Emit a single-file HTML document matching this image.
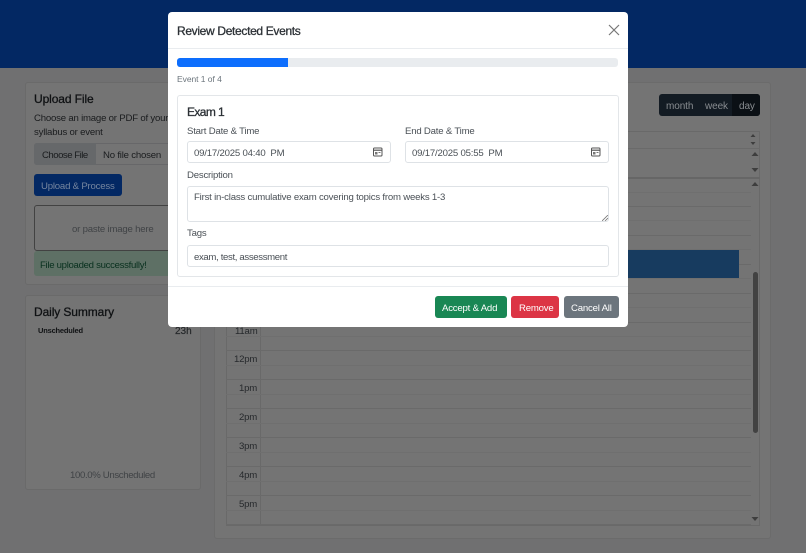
<!DOCTYPE html>
<html><head><meta charset="utf-8"><title>Review Detected Events</title>
<style>
html,body{margin:0;padding:0;width:806px;height:553px;overflow:hidden;background:#707071}
body{position:relative;font-family:"Liberation Sans",Arial,sans-serif}
.b{position:absolute;box-sizing:border-box}
.t{position:absolute;white-space:nowrap;line-height:14px;font-size:9.6px;letter-spacing:-.2px}
.h{position:absolute;white-space:nowrap;line-height:14px;font-size:12px;letter-spacing:-.1px;-webkit-text-stroke:.3px currentColor}
.l{position:absolute;height:1px;background:#6a6a6a}
.m{background:#6f6f6f}
.i{position:absolute;background:#fff;border:1px solid #dee2e6;border-radius:3px;box-sizing:border-box}
.ic{position:absolute;width:10px;height:10px}
</style></head><body>
<div class="b" style="left:0;top:0;width:806px;height:68px;background:#032863"></div>

<div class="b" style="left:25px;top:82px;width:180px;height:203px;background:#747474;border:1px solid #6a6a6a;border-radius:3px"></div>
<div class="h" style="left:34px;top:92px;color:#101214">Upload File</div>
<div class="t" style="left:34px;top:112px;color:#1a1c1e">Choose an image or PDF of your</div>
<div class="t" style="left:34px;top:126px;color:#1a1c1e">syllabus or event</div>
<div class="b" style="left:34px;top:143px;width:140px;height:22px;background:#747474;border:1px solid #676769;border-radius:3px"></div>
<div class="b" style="left:34px;top:143px;width:62px;height:22px;background:#66686a;border-radius:3px 0 0 3px"></div>
<div class="t" style="left:42px;top:149px;color:#1a1c1e;letter-spacing:-.5px">Choose File</div>
<div class="t" style="left:103px;top:149px;color:#1a1c1e">No file chosen</div>
<div class="b" style="left:34px;top:174px;width:88px;height:22px;background:#032863;border-radius:3px"></div>
<div class="t" style="left:41px;top:180px;color:#76869f">Upload &amp; Process</div>
<div class="b" style="left:34px;top:205px;width:164px;height:46px;border:1px solid #424242;border-radius:3px"></div>
<div class="t" style="left:72px;top:223px;color:#404346">or paste image here</div>
<div class="b" style="left:34px;top:251px;width:164px;height:25px;background:#5e7065;border-radius:3px"></div>
<div class="t" style="left:40px;top:259px;color:#08301e;letter-spacing:-.3px">File uploaded successfully!</div>

<div class="b" style="left:25px;top:295px;width:176px;height:195px;background:#747474;border:1px solid #6a6a6a;border-radius:3px"></div>
<div class="h" style="left:34px;top:305px;color:#101214">Daily Summary</div>
<div class="t" style="left:38px;top:324px;font-size:7.5px;font-weight:bold;color:#101214">Unscheduled</div>
<div class="t" style="left:175px;top:325px;font-size:10px;letter-spacing:0;-webkit-text-stroke:.2px currentColor;color:#26292b">23h</div>
<div class="t" style="left:70px;top:469px;color:#404346;letter-spacing:-.35px">100.0% Unscheduled</div>

<div class="b" style="left:214px;top:82px;width:557px;height:457px;background:#747474;border:1px solid #6b6b6b;border-radius:3px"></div>
<div class="b" style="left:659px;top:94px;width:101px;height:22px;background:#131b23;border-radius:3px"></div>
<div class="b" style="left:732px;top:94px;width:28px;height:22px;background:#0b1015;border-radius:0 3px 3px 0"></div>
<div class="t" style="left:666px;top:100px;color:#888c90;font-size:10px;letter-spacing:-.1px">month</div>
<div class="t" style="left:705px;top:100px;color:#888c90;font-size:10px;letter-spacing:-.1px">week</div>
<div class="t" style="left:739px;top:100px;color:#888c90;font-size:10px;letter-spacing:-.1px">day</div>

<div class="b" style="left:226px;top:131px;width:534px;height:395px;border:1px solid #696969"></div>
<div class="l" style="left:226px;top:148px;width:534px"></div>
<div class="l" style="left:226px;top:177px;width:534px;height:2px;background:#666"></div>
<div class="b" style="left:260px;top:179px;width:1px;height:347px;background:#696969"></div>
<div class="l m" style="left:226px;top:192px;width:525px"></div>
<div class="l" style="left:226px;top:206px;width:525px"></div>
<div class="l m" style="left:226px;top:220px;width:525px"></div>
<div class="l" style="left:226px;top:235px;width:525px"></div>
<div class="l m" style="left:226px;top:249px;width:525px"></div>
<div class="l" style="left:226px;top:264px;width:525px"></div>
<div class="l m" style="left:226px;top:278px;width:525px"></div>
<div class="l" style="left:226px;top:293px;width:525px"></div>
<div class="l m" style="left:226px;top:307px;width:525px"></div>
<div class="l" style="left:226px;top:322px;width:525px"></div>
<div class="l m" style="left:226px;top:336px;width:525px"></div>
<div class="l" style="left:226px;top:350px;width:525px"></div>
<div class="l m" style="left:226px;top:365px;width:525px"></div>
<div class="l" style="left:226px;top:379px;width:525px"></div>
<div class="l m" style="left:226px;top:394px;width:525px"></div>
<div class="l" style="left:226px;top:408px;width:525px"></div>
<div class="l m" style="left:226px;top:423px;width:525px"></div>
<div class="l" style="left:226px;top:437px;width:525px"></div>
<div class="l m" style="left:226px;top:452px;width:525px"></div>
<div class="l" style="left:226px;top:466px;width:525px"></div>
<div class="l m" style="left:226px;top:481px;width:525px"></div>
<div class="l" style="left:226px;top:495px;width:525px"></div>
<div class="l m" style="left:226px;top:510px;width:525px"></div>
<div class="l" style="left:226px;top:524px;width:525px"></div>
<div class="b" style="left:260px;top:250px;width:479px;height:28px;background:#173b5f"></div>
<div class="t" style="left:235px;top:325px;color:#26292c">11am</div>
<div class="t" style="left:234px;top:353px;color:#26292c">12pm</div>
<div class="t" style="left:239px;top:382px;color:#26292c">1pm</div>
<div class="t" style="left:239px;top:411px;color:#26292c">2pm</div>
<div class="t" style="left:239px;top:440px;color:#26292c">3pm</div>
<div class="t" style="left:239px;top:469px;color:#26292c">4pm</div>
<div class="t" style="left:239px;top:498px;color:#26292c">5pm</div>
<div class="b" style="left:753px;top:272px;width:5px;height:161px;background:#424242;border-radius:3px"></div>
<svg class="b" style="left:745px;top:130px" width="20" height="396" viewBox="0 0 20 396">
<path d="M8 4l2.500 3h-5zM8 15l-2.500-3h5zM10 22l3.500 4h-7zM10 42l-3.500-4h7zM10 52l3.500 4h-7zM10 391l-3.500-4h7z" fill="#3e3e3e"/></svg>

<div class="b" style="left:168px;top:12px;width:460px;height:315px;background:#fff;border-radius:4px"></div>
<div class="h" style="left:177px;top:24px;color:#2c3136;letter-spacing:-.33px">Review Detected Events</div>
<svg class="b" style="left:608px;top:24px" width="12" height="12" viewBox="0 0 12 12"><path d="M1 1l10 10M11 1L1 11" stroke="#777" stroke-width="1.200" fill="none"/></svg>
<div class="l" style="left:168px;top:48px;width:460px;background:#e9ecef"></div>
<div class="b" style="left:177px;top:58px;width:441px;height:9px;background:#e9ecef;border-radius:3px;overflow:hidden"><div class="b" style="left:0;top:0;width:111px;height:9px;background:#0d6efd"></div></div>
<div class="t" style="left:177px;top:72px;font-size:8.500px;color:#6c757d;letter-spacing:-.05px">Event 1 of 4</div>

<div class="b" style="left:177px;top:95px;width:441.500px;height:182px;border:1px solid #e3e6e9;border-radius:3px"></div>
<div class="h" style="left:187px;top:105px;color:#2c3136;letter-spacing:-.6px">Exam 1</div>
<div class="t" style="left:187px;top:125px;color:#4a5056">Start Date &amp; Time</div>
<div class="t" style="left:405px;top:125px;color:#4a5056">End Date &amp; Time</div>
<div class="i" style="left:187px;top:141px;width:204px;height:22px"></div>
<div class="i" style="left:405px;top:141px;width:204px;height:22px"></div>
<div class="t" style="left:194px;top:147px;color:#4a5056">09/17/2025 04:40&nbsp; PM</div>
<div class="t" style="left:412px;top:147px;color:#4a5056">09/17/2025 05:55&nbsp; PM</div>
<svg class="ic" style="left:373px;top:147px" viewBox="0 0 10 10"><rect x=".5" y="1" width="8.500" height="8" rx="1" fill="none" stroke="#555"/><path d="M.5 3.200h8.500" stroke="#555" stroke-width="1.200"/><path d="M2 5h2.500v2.500H2zM5.500 5H7.500v1H5.500z" fill="#777"/></svg>
<svg class="ic" style="left:591px;top:147px" viewBox="0 0 10 10"><rect x=".5" y="1" width="8.500" height="8" rx="1" fill="none" stroke="#555"/><path d="M.5 3.200h8.500" stroke="#555" stroke-width="1.200"/><path d="M2 5h2.500v2.500H2zM5.500 5H7.500v1H5.500z" fill="#777"/></svg>
<div class="t" style="left:187px;top:169px;color:#4a5056">Description</div>
<div class="i" style="left:187px;top:186px;width:422px;height:36px"></div>
<div class="t" style="left:194px;top:191px;color:#4a5056">First in-class cumulative exam covering topics from weeks 1-3</div>
<svg class="b" style="left:602px;top:215px" width="6" height="6" viewBox="0 0 6 6"><path d="M0 6L6 0M3 6L6 3" stroke="#777" stroke-width=".8"/></svg>
<div class="t" style="left:187px;top:227px;color:#4a5056">Tags</div>
<div class="i" style="left:187px;top:245px;width:422px;height:22px"></div>
<div class="t" style="left:194px;top:251px;color:#4a5056;letter-spacing:-.35px">exam, test, assessment</div>
<div class="l" style="left:168px;top:286px;width:460px;background:#e9ecef"></div>
<div class="b" style="left:435px;top:296px;width:72px;height:22px;background:#198754;border-radius:3px"></div>
<div class="b" style="left:511px;top:296px;width:48px;height:22px;background:#dc3545;border-radius:3px"></div>
<div class="b" style="left:564px;top:296px;width:55px;height:22px;background:#6c757d;border-radius:3px"></div>
<div class="t" style="left:442px;top:302px;color:#fff">Accept &amp; Add</div>
<div class="t" style="left:519px;top:302px;color:#fff">Remove</div>
<div class="t" style="left:571px;top:302px;color:#fff">Cancel All</div>
</body></html>
